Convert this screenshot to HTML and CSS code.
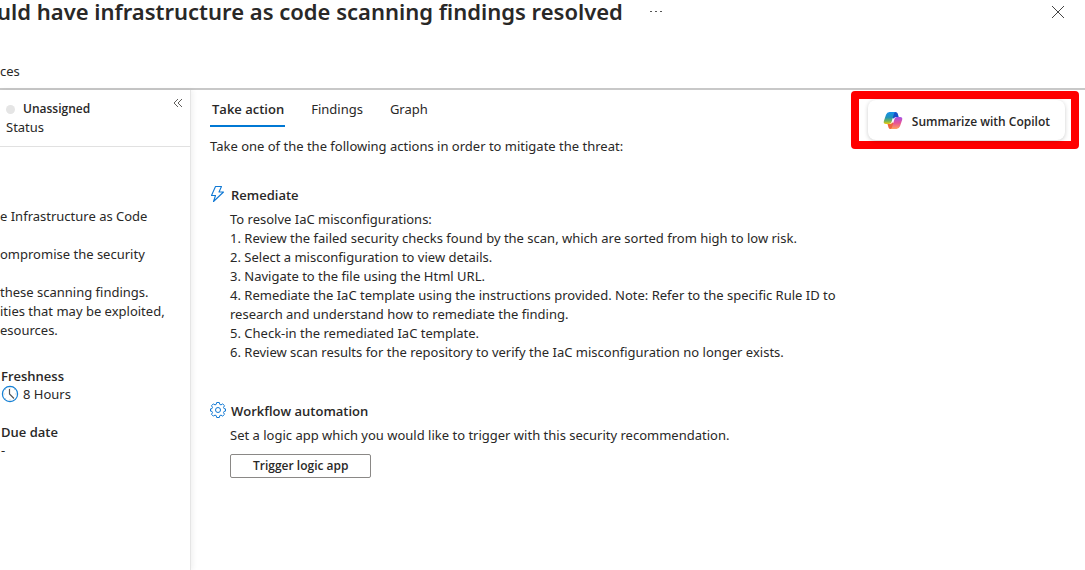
FILE: index.html
```html
<!DOCTYPE html>
<html lang="en">
<head>
<meta charset="utf-8">
<title>Infrastructure as code scanning findings</title>
<link rel="stylesheet" href="styles.css">
</head>
<body>
<div class="page">
  <header class="header">
    <div class="title-row">
      <h1 class="title">uld have infrastructure as code scanning findings resolved</h1>
      <button class="icon-button more" type="button" aria-label="More actions">
        <svg width="12" height="2" viewBox="0 0 12 2" fill="#555"><rect width="2" height="1"/><rect x="5" width="2" height="1"/><rect x="10" width="2" height="1"/></svg>
      </button>
      <button class="icon-button close" type="button" aria-label="Close">
        <svg width="14" height="14" viewBox="0 0 14 14" fill="none" stroke="#444"><path d="M1 1l12 12M13 1L1 13"/></svg>
      </button>
    </div>
    <div class="toolbar">ces</div>
  </header>
  <div class="body">
    <aside class="sidebar">
      <div class="status">
        <div>
          <div class="status-value"><span class="dot"></span><strong>Unassigned</strong></div>
          <div>Status</div>
        </div>
        <button class="icon-button collapse" type="button" aria-label="Collapse">
          <svg width="10" height="10" viewBox="0 0 10 10" fill="none" stroke="#605e5c"><path d="M5 1L1 5l4 4M9 1L5 5l4 4"/></svg>
        </button>
      </div>
      <div class="description">
        <p>e Infrastructure as Code</p>
        <p>ompromise the security</p>
        <p>these scanning findings.<br>ities that may be exploited,<br>esources.</p>
      </div>
      <dl class="facts">
        <dt>Freshness</dt>
        <dd>
          <svg width="18" height="18" viewBox="0 0 18 18" fill="none"><circle cx="9" cy="9" r="7.6" stroke="#1580d5" stroke-width="1.2"/><path d="M9 2.500v1M9 14.500v1M2.500 9h1M14.500 9h1M4.400 4.400l.7.7M13.600 4.400l-.7.7M4.400 13.600l.7-.7" stroke="#9a9a9a" stroke-width=".8"/><path d="M8.500 4v5l4.500 4.500" stroke="#555" stroke-width="1.2"/></svg>
          8 Hours
        </dd>
        <dt>Due date</dt>
        <dd>-</dd>
      </dl>
    </aside>
    <main class="main">
      <div class="tabs" role="tablist">
        <button class="tab active" type="button" role="tab" aria-selected="true">Take action</button>
        <button class="tab" type="button" role="tab" aria-selected="false">Findings</button>
        <button class="tab" type="button" role="tab" aria-selected="false">Graph</button>
      </div>
      <p class="intro">Take one of the the following actions in order to mitigate the threat:</p>
      <section class="section">
        <h2 class="heading">
          <svg width="16" height="18" viewBox="0 0 16 18" fill="none" stroke="#0f78d4" stroke-width="1.1" stroke-linejoin="round"><path d="M5.500 1.500h6L9 7h4.500L3.500 16.500 5.500 10.500h-4z"/></svg>
          Remediate
        </h2>
        <div class="content">
          <p>To resolve IaC misconfigurations:</p>
          <ol class="steps">
            <li>Review the failed security checks found by the scan, which are sorted from high to low risk.</li>
            <li>Select a misconfiguration to view details.</li>
            <li>Navigate to the file using the Html URL.</li>
            <li>Remediate the IaC template using the instructions provided. Note: Refer to the specific Rule ID to<br>research and understand how to remediate the finding.</li>
            <li>Check-in the remediated IaC template.</li>
            <li>Review scan results for the repository to verify the IaC misconfiguration no longer exists.</li>
          </ol>
        </div>
      </section>
      <section class="section">
        <h2 class="heading">
          <svg width="16" height="18" viewBox="0 0 16 18" fill="none" stroke="#0f78d4" stroke-linejoin="round"><path d="M6.700 1.500h2.600l.5 1.900 1.200.5 1.700-1 1.800 1.800-1 1.700.5 1.200 1.500.3v2.200l-1.500.3-.5 1.200 1 1.700-1.800 1.800-1.700-1-1.200.5-.5 1.900H6.700l-.5-1.900-1.200-.5-1.700 1-1.800-1.800 1-1.700L2 10.400.5 10.100V7.900L2 7.600l.5-1.200-1-1.700 1.800-1.800 1.700 1 1.200-.5z"/><circle cx="8" cy="9" r="2.500"/></svg>
          Workflow automation
        </h2>
        <div class="content">
          <p>Set a logic app which you would like to trigger with this security recommendation.</p>
          <button class="trigger" type="button">Trigger logic app</button>
        </div>
      </section>
      <div class="callout">
        <button class="copilot" type="button">
          <svg width="20" height="20" viewBox="0 0 20 20">
            <defs>
              <linearGradient id="cool" x1="0" y1="0" x2="0" y2="1"><stop offset="0" stop-color="#1590ed"/><stop offset=".45" stop-color="#2394b8"/><stop offset=".75" stop-color="#70b45b"/><stop offset="1" stop-color="#f3ca08"/></linearGradient>
              <linearGradient id="warm" x1="0" y1="0" x2="0" y2="1"><stop offset="0" stop-color="#a652e8"/><stop offset=".5" stop-color="#e75397"/><stop offset="1" stop-color="#ffa35c"/></linearGradient>
            </defs>
            <path fill="#1750c8" d="M9 1h3.500q1.700 0 2.200 1.500L15.700 6h-3q-1.200 0-1.700 1.500L9 7z"/>
            <path fill="#ee663c" d="M11 18H7.500q-1.500 0-2-1.500L4.500 13h2.700q1.300 0 1.800-1.500l2 .5z"/>
            <path fill="url(#cool)" d="M6.500 1h6.300q-1.300 0-1.800 1.700L8.500 11q-.6 2-2.500 2H3Q0 13 .9 10L3 3.700Q4 1 6.500 1z"/>
            <path fill="url(#warm)" d="M13.500 18H7.300q1.200 0 1.700-1.700L11.500 8q.6-2 2.500-2h3q3 0 2.100 3L17 15.300Q16 18 13.500 18z"/>
          </svg>
          Summarize with Copilot
        </button>
      </div>
    </main>
  </div>
</div>
</body>
</html>
```
FILE: styles.css
```css
* { box-sizing: border-box; }
body {
  margin: 0;
  font: 13px/19px "Noto Sans", "Open Sans", sans-serif;
  color: #292827;
  background: #fff;
}
h1, h2, p, ol, dl, dd { margin: 0; padding: 0; }
button { font: inherit; color: inherit; background: none; border: 0; padding: 0; }
svg { display: block; flex: none; }
strong, dt, .heading, .active, .trigger, .copilot { font-family: "Open Sans", sans-serif; font-weight: 600; }
.page { min-height: 100vh; display: flex; flex-direction: column; overflow: hidden; }
.header { border-bottom: 2px solid #c8c8c8; }
.title-row { display: flex; align-items: center; height: 24px; padding-right: 20px; }
.title { font: 600 22px/22px "Noto Sans", sans-serif; margin: 0 0 2px -3px; white-space: nowrap; }
.icon-button { display: flex; flex: none; }
.more { margin-left: 27px; }
.close { margin-left: auto; }
.toolbar { padding: 38px 0 7px; }
.body { display: flex; flex: 1; }
.sidebar { width: 191px; flex: none; border-right: 1px solid #e5e5e5; box-shadow: 2px 0 5px #0000000f; white-space: nowrap; }
.status { display: flex; justify-content: space-between; padding: 10px 7px 10px 6px; border-bottom: 1px solid #e1e1e1; line-height: 18px; }
.status-value { display: flex; align-items: center; gap: 8px; }
.status-value strong { font-size: 12px; }
.dot { width: 9px; height: 9px; border-radius: 50%; background: #e5e5e5; }
.collapse { align-self: flex-start; margin-top: -2px; }
.description { display: grid; gap: 19px; padding-top: 60px; }
.facts { padding: 27px 1px; line-height: 18px; }
.facts dd { display: flex; align-items: center; gap: 4px; margin-bottom: 20px; }
.main { position: relative; flex: 1; min-width: 0; padding: 10px 19px; }
.tabs { display: flex; gap: 24px; }
.tab { padding: 0 1px 6px 2px; border-bottom: 2px solid transparent; }
.active { border-color: #0078d4; }
.intro { padding-top: 10px; }
.section { padding-top: 30px; }
.heading { display: flex; align-items: center; gap: 5px; font-size: 13px; line-height: 19px; }
.heading svg { margin: -4px 0 0; }
.content { padding: 5px 0 0 20px; }
.steps { list-style: none; counter-reset: step; }
.steps li { counter-increment: step; }
.steps li::before { content: counter(step) ". "; }
.section + .section { padding-top: 40px; }
.trigger { display: block; height: 24px; margin-top: 9px; padding: 0 22px; border: 1px solid #8a8886; border-radius: 2px; font-size: 12px; line-height: 20px; }
.callout { position: absolute; top: 1px; right: 6px; padding: 0 5px 0 8px; border: 8px solid #f00; border-radius: 4px; }
.copilot { display: flex; align-items: center; gap: 9px; height: 40px; margin: 1px; padding: 2px 15px 0; border-radius: 8px; box-shadow: 0 1px 4px #00000033; font-size: 12px; white-space: nowrap; }
```
